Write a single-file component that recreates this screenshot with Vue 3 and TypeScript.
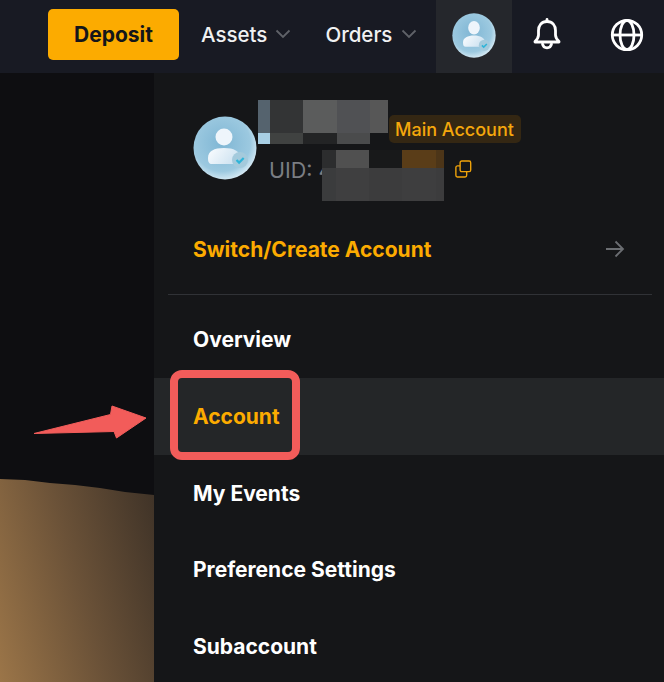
<script setup lang="ts">
interface Block {
  w: number
  color: string
}

const menuItems = ['Overview', 'Account', 'My Events', 'Preference Settings', 'Subaccount']

const nameTop: Block[] = [
  { w: 12, color: '#55636e' },
  { w: 33, color: '#333435' },
  { w: 34, color: '#5b5c5c' },
  { w: 33, color: '#505154' },
  { w: 18, color: '#575757' },
]
const nameBottom: Block[] = [
  { w: 12, color: '#a8cfe4' },
  { w: 33, color: '#404241' },
  { w: 34, color: '#232425' },
  { w: 33, color: '#4a4b4c' },
  { w: 18, color: '#151618' },
]
const uidTop: Block[] = [
  { w: 14, color: '#2c2d2e' },
  { w: 33, color: '#505050' },
  { w: 33, color: '#18191a' },
  { w: 34, color: '#5a3d18' },
  { w: 8, color: '#4c3518' },
]
const uidBottom: Block[] = [
  { w: 14, color: '#3b3c3d' },
  { w: 33, color: '#3f3f40' },
  { w: 33, color: '#3c3c3d' },
  { w: 34, color: '#3e3e3f' },
  { w: 8, color: '#3c3c3d' },
]
</script>

<template>
  <div class="page">
    <header class="topbar">
      <button class="deposit">Deposit</button>
      <div class="nav-link assets">
        <span>Assets</span>
        <svg class="chev" width="16" height="10" viewBox="0 0 16 10"><path d="M1.500 1.500 8 8l6.500-6.500" /></svg>
      </div>
      <div class="nav-link orders">
        <span>Orders</span>
        <svg class="chev" width="16" height="10" viewBox="0 0 16 10"><path d="M1.500 1.500 8 8l6.500-6.500" /></svg>
      </div>
      <div class="avatar-tile">
        <svg width="44" height="45" viewBox="0 0 64 64" preserveAspectRatio="none">
          <defs>
            <radialGradient id="av1" cx="45%" cy="42%" r="60%">
              <stop offset="0" stop-color="#7fb6d4" />
              <stop offset="0.75" stop-color="#9cc9e0" />
              <stop offset="1" stop-color="#d8ebf5" />
            </radialGradient>
            <linearGradient id="body1" x1="0" y1="0" x2="1" y2="0.400">
              <stop offset="0" stop-color="#fbfdff" />
              <stop offset="1" stop-color="#cfe3f1" />
            </linearGradient>
          </defs>
          <circle cx="32" cy="32" r="31.500" fill="url(#av1)" />
          <ellipse cx="32" cy="21" rx="8.500" ry="9.500" fill="#eef5fb" />
          <path d="M16 42c0-7 7-10 16-10s16 3 16 10c0 4-1 6-4 6H20c-3 0-4-2-4-6z" fill="url(#body1)" />
          <circle cx="47" cy="46" r="8" fill="#a4cadc" />
          <path d="M43.500 46l2.600 2.600 4.600-4.600" fill="none" stroke="#2fb4d8" stroke-width="2.200" />
        </svg>
      </div>
      <div class="icon-cell bell">
        <svg width="30" height="32" viewBox="0 0 30 32" fill="none" stroke="#fff" stroke-width="2.800" stroke-linejoin="round" stroke-linecap="round">
          <path d="M15 3.500c-5.500 0-8.500 4-8.500 9v4.500c0 2.500-1 4-3.500 6.500v.500h24v-.500c-2.500-2.500-3.500-4-3.500-6.500v-4.500c0-5-3-9-8.500-9z" />
          <path d="M15 1.500v2" />
          <path d="M10.500 26c.5 2.500 2.300 3.800 4.500 3.800s4-1.300 4.500-3.800" />
        </svg>
      </div>
      <div class="icon-cell globe">
        <svg width="34" height="34" viewBox="0 0 34 34" fill="none" stroke="#fff" stroke-width="2.800">
          <circle cx="17" cy="17" r="14.700" />
          <ellipse cx="17" cy="17" rx="7" ry="14.700" />
          <path d="M2.500 17h29" />
        </svg>
      </div>
    </header>

    <div class="body">
      <aside class="backdrop">
        <div class="hill"></div>
      </aside>

      <section class="menu">
        <div class="profile">
          <svg class="profile-avatar" width="64" height="64" viewBox="0 0 64 64">
            <defs>
              <radialGradient id="av2" cx="45%" cy="42%" r="60%">
                <stop offset="0" stop-color="#7fb6d4" />
                <stop offset="0.75" stop-color="#9cc9e0" />
                <stop offset="1" stop-color="#d8ebf5" />
              </radialGradient>
              <linearGradient id="body2" x1="0" y1="0" x2="1" y2="0.400">
                <stop offset="0" stop-color="#fbfdff" />
                <stop offset="1" stop-color="#cfe3f1" />
              </linearGradient>
            </defs>
            <circle cx="32" cy="32" r="31.500" fill="url(#av2)" />
            <circle cx="31" cy="21" r="8.500" fill="#eef5fb" />
            <path d="M15 42c0-7 6-10 16-10s16 3 16 10c0 4-1 6-4 6H19c-3 0-4-2-4-6z" fill="url(#body2)" />
            <circle cx="47" cy="44" r="8" fill="#a4cadc" />
            <path d="M43.500 44l2.600 2.600 4.600-4.600" fill="none" stroke="#2fb4d8" stroke-width="2.200" />
          </svg>
          <div class="profile-text">
            <div class="name-row">
              <div class="name-mosaic">
                <div class="mosaic-row top">
                  <i v-for="(b, i) in nameTop" :key="i" :style="{ width: b.w + 'px', background: b.color }"></i>
                </div>
                <div class="mosaic-row bottom">
                  <i v-for="(b, i) in nameBottom" :key="i" :style="{ width: b.w + 'px', background: b.color }"></i>
                </div>
              </div>
              <span class="badge">Main Account</span>
            </div>
            <div class="uid-row">
              <span class="uid">UID: 4</span>
              <div class="uid-mosaic">
                <div class="mosaic-row utop">
                  <i v-for="(b, i) in uidTop" :key="i" :style="{ width: b.w + 'px', background: b.color }"></i>
                </div>
                <div class="mosaic-row ubottom">
                  <i v-for="(b, i) in uidBottom" :key="i" :style="{ width: b.w + 'px', background: b.color }"></i>
                </div>
              </div>
              <svg class="copy" width="17" height="18" viewBox="0 0 16 17" fill="none" stroke="#f0a30a" stroke-width="1.300">
                <rect x="4.800" y="1" width="10" height="10" rx="1.500" />
                <path d="M4.800 5.500H2.200A1.500 1.500 0 0 0 .8 7v7.500A1.500 1.500 0 0 0 2.200 16h7.300a1.500 1.500 0 0 0 1.500-1.500V11" />
              </svg>
            </div>
          </div>
        </div>

        <div class="switch">
          <span>Switch/Create Account</span>
          <svg width="20" height="18" viewBox="0 0 20 18" fill="none" stroke="#6b6e72" stroke-width="1.800">
            <path d="M1 9h17M10.500 1.500 18 9l-7.500 7.500" />
          </svg>
        </div>
        <div class="divider"></div>

        <ul class="items">
          <li v-for="item in menuItems" :key="item" class="item" :class="{ active: item === 'Account' }">
            <span>{{ item }}</span>
          </li>
        </ul>
      </section>
    </div>

    <div class="highlight"></div>
    <svg class="arrow" width="120" height="40" viewBox="30 404 120 40">
      <path d="M34 433.500 110.500 414.500 112 406 146 418 116.500 438 114 431.500z" fill="#f25c5a" stroke="#f25c5a" stroke-width="1" stroke-linejoin="round" />
    </svg>
  </div>
</template>

<style scoped>
.page {
  position: relative;
  width: 664px;
  height: 682px;
  overflow: hidden;
  background: #0e0e11;
  font-family: Inter, "Liberation Sans", sans-serif;
  color: #fff;
}

.topbar {
  display: flex;
  align-items: center;
  height: 73px;
  padding-left: 48px;
  background: #181a23;
}

.deposit {
  width: 131px;
  height: 51px;
  margin-top: -5px;
  border: 0;
  border-radius: 5px;
  background: #fcab00;
  color: #14161a;
  font: 700 21px Inter, "Liberation Sans", sans-serif;
}

.nav-link {
  display: flex;
  align-items: center;
  gap: 8px;
  margin-top: -5px;
  font-size: 20.500px;
  font-weight: 500;
  color: #f0f1f2;
}

.assets {
  margin-left: 22px;
}

.orders {
  margin-left: 34px;
  gap: 9px;
}

.chev {
  fill: none;
  stroke: #5f6268;
  stroke-width: 1.800;
}

.avatar-tile {
  position: absolute;
  left: 436px;
  top: 0;
  display: flex;
  align-items: center;
  justify-content: center;
  box-sizing: border-box;
  width: 76px;
  height: 73px;
  padding-bottom: 3px;
  background: #25272c;
}

.icon-cell {
  position: absolute;
  top: 18px;
}

.bell {
  left: 532px;
}

.globe {
  left: 610px;
}

.body {
  display: flex;
  height: 609px;
}

.backdrop {
  width: 154px;
  flex: none;
}

.hill {
  width: 154px;
  height: 203px;
  margin-top: 406px;
  background: linear-gradient(75deg, #9b7548 0%, #6b5238 50%, #3e3227 100%);
  clip-path: polygon(0 0, 25px 1px, 50px 4px, 75px 6px, 100px 9px, 125px 13px, 154px 16px, 154px 100%, 0 100%);
}

.menu {
  flex: 1;
  background: #151618;
}

.profile {
  display: flex;
  align-items: flex-start;
  gap: 12px;
  box-sizing: border-box;
  height: 140px;
  padding: 27px 0 0 39px;
}

.profile-avatar {
  flex: none;
  margin-top: 16px;
}

.name-row {
  display: flex;
  align-items: flex-end;
  margin-left: -11px;
}

.mosaic-row {
  display: flex;
}

.mosaic-row i {
  display: block;
  height: 100%;
}

.name-mosaic {
  width: 130px;
}

.top {
  height: 33px;
}

.bottom {
  height: 11px;
}

.badge {
  height: 28px;
  margin-left: 1px;
  margin-bottom: 1px;
  padding: 0 7px 0 6px;
  border-radius: 5px;
  background: #342713;
  color: #f5a70c;
  font-size: 18px;
  font-weight: 500;
  line-height: 29px;
  white-space: nowrap;
}

.uid-row {
  position: relative;
  display: flex;
  align-items: center;
  height: 51px;
  margin-top: 6px;
}

.uid {
  color: #7b7e83;
  font-size: 21.500px;
  margin-top: -11px;
}

.uid-mosaic {
  position: absolute;
  left: 53px;
  top: 0;
  width: 122px;
}

.utop {
  height: 18px;
}

.ubottom {
  height: 33px;
}

.copy {
  position: absolute;
  left: 186px;
  top: 10px;
}

.switch {
  display: flex;
  align-items: center;
  justify-content: space-between;
  box-sizing: border-box;
  height: 81px;
  padding: 0 39px 9px;
  color: #fcab00;
  font-size: 21px;
  font-weight: 700;
}

.divider {
  width: 484px;
  height: 1px;
  margin-left: 14px;
  background: #303236;
}

.items {
  margin: 6.500px 0 0;
  padding: 0;
  list-style: none;
}

.item {
  display: flex;
  align-items: center;
  height: 76.700px;
  padding-left: 39px;
  font-size: 21px;
  font-weight: 700;
}

.item.active {
  background: #242628;
  color: #fcab00;
}

.highlight {
  position: absolute;
  left: 170px;
  top: 370px;
  width: 130px;
  height: 90px;
  box-sizing: border-box;
  border: 8px solid #f25c5a;
  border-radius: 12px;
}

.arrow {
  position: absolute;
  left: 30px;
  top: 404px;
}
</style>
